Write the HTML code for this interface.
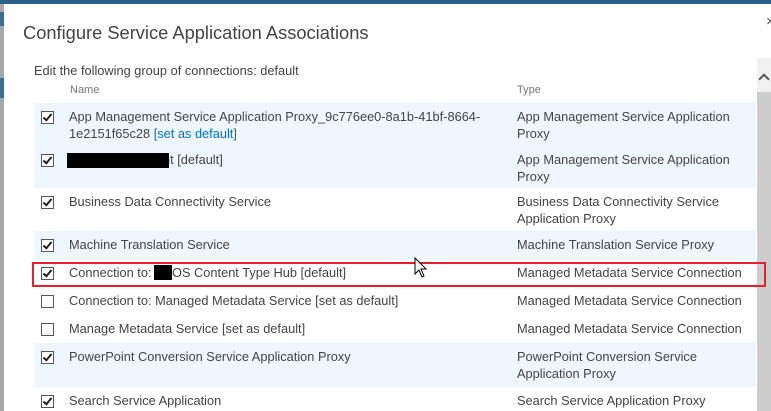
<!DOCTYPE html><html><head><style>
body{margin:0;width:771px;height:411px;overflow:hidden;background:#fff;font-family:"Liberation Sans",sans-serif;position:relative;color:#444}
.a{position:absolute}
.t{font-size:12.8px;line-height:17px;color:#444;white-space:nowrap}
.cb{position:absolute;left:41px;width:11px;height:11px;border:1px solid #555;background:#fff}
.cb.c::after{content:"";position:absolute;left:3px;top:0px;width:3px;height:7px;border:solid #222;border-width:0 2px 2px 0;transform:rotate(40deg)}
.sh{position:absolute;left:34px;width:722px;background:#eff6fd}
.lnk{color:#0072c6}
</style></head><body>
<div class="a" style="left:0;top:0;width:771px;height:4px;background:#2d5f8b"></div>
<div class="a" style="left:0;top:4px;width:4px;height:407px;background:#a8a8a8"></div>
<div class="a" style="left:0;top:12px;width:4px;height:14px;background:#3d6d96"></div>
<div class="a" style="left:0;top:78px;width:4px;height:20px;background:#3d6d96"></div>
<div class="a" style="left:757px;top:58px;width:14px;height:353px;background:#cdcdcd"></div>
<div class="a" style="left:757px;top:58px;width:14px;height:34px;background:#f0f0f0"></div>
<div class="a" style="left:760px;top:75px;width:6px;height:6px;border:solid #555;border-width:2px 0 0 2px;transform:rotate(45deg)"></div>
<div class="a" style="left:766px;top:13px;font-size:15px;color:#555">×</div>
<div class="a" style="left:23px;top:22px;font-size:18.3px;color:#444">Configure Service Application Associations</div>
<div class="a t" style="left:34px;top:62px">Edit the following group of connections: default</div>
<div class="a" style="left:70px;top:84px;font-size:11px;color:#777">Name</div>
<div class="a" style="left:517px;top:84px;font-size:11px;color:#777">Type</div>
<div class="sh" style="top:103px;height:85px"></div>
<div class="sh" style="top:231px;height:28px"></div>
<div class="sh" style="top:343px;height:44px"></div>

<div class="cb c" style="top:111px"></div>
<div class="a t" style="left:69px;top:108px">App Management Service Application Proxy_9c776ee0-8a1b-41bf-8664-<br>1e2151f65c28 <span class="lnk">[set as default]</span></div>
<div class="a t" style="left:517px;top:108px">App Management Service Application<br>Proxy</div>

<div class="cb c" style="top:154px"></div>
<div class="a t" style="left:163px;top:151px">nt [default]</div>
<div class="a" style="left:67px;top:153px;width:102px;height:15px;background:#000"></div>
<div class="a t" style="left:517px;top:151px">App Management Service Application<br>Proxy</div>

<div class="cb c" style="top:196px"></div>
<div class="a t" style="left:69px;top:193px">Business Data Connectivity Service</div>
<div class="a t" style="left:517px;top:193px">Business Data Connectivity Service<br>Application Proxy</div>

<div class="cb c" style="top:239px"></div>
<div class="a t" style="left:69px;top:236px">Machine Translation Service</div>
<div class="a t" style="left:517px;top:236px">Machine Translation Service Proxy</div>

<div class="a" style="left:32px;top:262px;width:730px;height:21px;border:2.5px solid #e8202a"></div>
<div class="cb c" style="top:267px"></div>
<div class="a t" style="left:69px;top:264px">Connection to:</div>
<div class="a t" style="left:172px;top:264px">OS Content Type Hub [default]</div>
<div class="a" style="left:154px;top:265px;width:18px;height:15px;background:#000"></div>
<div class="a t" style="left:517px;top:264px">Managed Metadata Service Connection</div>

<div class="cb" style="top:295px"></div>
<div class="a t" style="left:69px;top:292px">Connection to: Managed Metadata Service [set as default]</div>
<div class="a t" style="left:517px;top:292px">Managed Metadata Service Connection</div>

<div class="cb" style="top:323px"></div>
<div class="a t" style="left:69px;top:320px">Manage Metadata Service [set as default]</div>
<div class="a t" style="left:517px;top:320px">Managed Metadata Service Connection</div>

<div class="cb c" style="top:351px"></div>
<div class="a t" style="left:69px;top:348px">PowerPoint Conversion Service Application Proxy</div>
<div class="a t" style="left:517px;top:348px">PowerPoint Conversion Service<br>Application Proxy</div>

<div class="cb c" style="top:395px"></div>
<div class="a t" style="left:69px;top:392px">Search Service Application</div>
<div class="a t" style="left:517px;top:392px">Search Service Application Proxy</div>

<svg class="a" style="left:414px;top:257px" width="14" height="22" viewBox="0 0 14 22"><path d="M1 1 L1 17 L5 13 L8 20 L10 19 L7 12 L12 12 Z" fill="#fff" stroke="#000" stroke-width="1"/></svg>
</body></html>
